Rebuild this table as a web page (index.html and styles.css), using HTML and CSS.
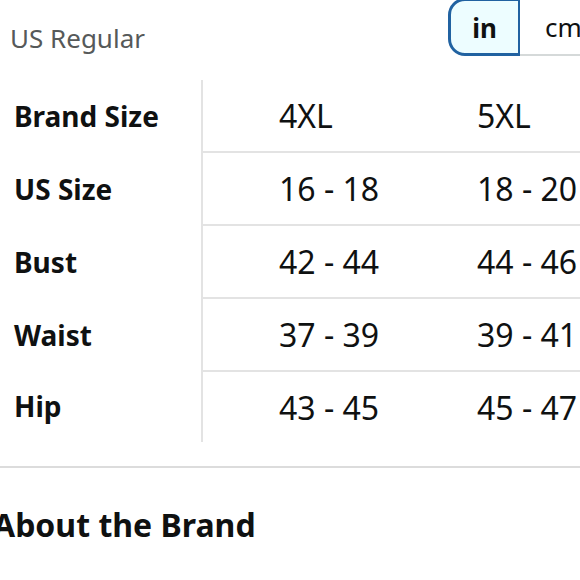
FILE: index.html
```html
<!DOCTYPE html>
<html>
<head>
<meta charset="utf-8">
<link rel="stylesheet" href="styles.css">
</head>
<body>
<div class="page">
  <div class="header">
    <div class="title">US Regular</div>
    <div class="toggle">
      <div class="opt opt-active">in</div>
      <div class="opt">cm</div>
    </div>
  </div>
  <div class="table">
    <div class="labels">
      <div class="label">Brand Size</div>
      <div class="label">US Size</div>
      <div class="label">Bust</div>
      <div class="label">Waist</div>
      <div class="label">Hip</div>
    </div>
    <div class="data">
      <div class="row"><div class="cell">4XL</div><div class="cell">5XL</div></div>
      <div class="row"><div class="cell">16 - 18</div><div class="cell">18 - 20</div></div>
      <div class="row"><div class="cell">42 - 44</div><div class="cell">44 - 46</div></div>
      <div class="row"><div class="cell">37 - 39</div><div class="cell">39 - 41</div></div>
      <div class="row last"><div class="cell">43 - 45</div><div class="cell">45 - 47</div></div>
    </div>
  </div>
  <div class="rule"></div>
  <h2 class="about">About the Brand</h2>
</div>
</body>
</html>
```
FILE: styles.css
```css
html, body {
  margin: 0;
  padding: 0;
  background: #fff;
}
body {
  width: 580px;
  height: 580px;
  overflow: hidden;
  font-family: "Noto Sans", "Open Sans", sans-serif;
  color: #0f1111;
}
.page {
  width: 580px;
}
.header {
  display: flex;
  align-items: flex-start;
  height: 55px;
}
.title {
  flex: 0 0 439px;
  padding-left: 10px;
  font-size: 26px;
  line-height: 30px;
  margin-top: 23px;
  color: #565959;
}
.toggle {
  display: flex;
  flex: 0 0 auto;
}
.opt {
  box-sizing: border-box;
  height: 58px;
  margin-top: -2px;
  display: flex;
  align-items: center;
  font-size: 26px;
  padding-top: 2px;
}
.opt-active {
  width: 72px;
  margin-left: -1px;
  justify-content: center;
  border: 3px solid #2162a1;
  border-right-width: 2px;
  border-radius: 17px 0 0 17px;
  background: #edfdff;
  font-weight: 700;
}
.opt:not(.opt-active) {
  width: 90px;
  padding-left: 25px;
  border-bottom: 2px solid #d5d9d9;
}
.table {
  display: flex;
  margin-top: 25px;
}
.labels {
  flex: 0 0 201px;
  border-right: 2px solid #e3e3e3;
}
.label {
  height: 73px;
  display: flex;
  align-items: center;
  padding-left: 14px;
  font-size: 28px;
  font-weight: 700;
  box-sizing: border-box;
  padding-bottom: 2px;
}
.labels .label:last-child {
  height: 70px;
}
.data {
  flex: 1 1 auto;
}
.row {
  display: flex;
  height: 73px;
  box-sizing: border-box;
  border-bottom: 2px solid #e3e3e3;
}
.row.last {
  border-bottom: none;
  height: 70px;
}
.cell {
  flex: 0 0 198px;
  box-sizing: border-box;
  padding-left: 76px;
  display: flex;
  align-items: center;
  font-size: 32px;
  white-space: nowrap;
}
.rule {
  margin-top: 24px;
  height: 2px;
  background: #dcdcdc;
}
.about {
  margin: 37px 0 0 -7px;
  font-size: 32px;
  font-weight: 700;
  line-height: 40px;
}
```
